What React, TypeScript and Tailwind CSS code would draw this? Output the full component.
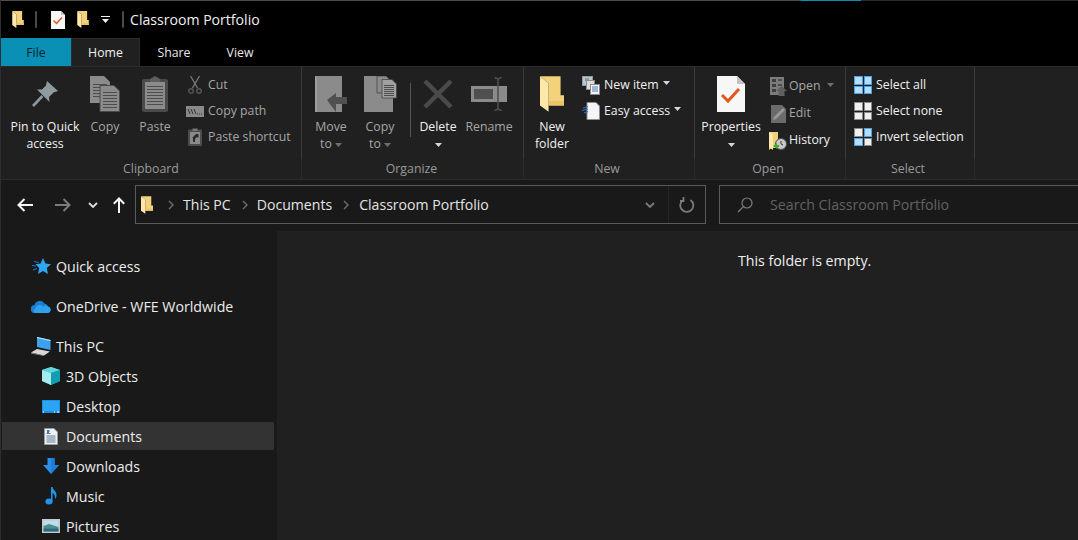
import type { ReactNode } from "react";

const FONT = "font-['Open_Sans','Noto_Sans',sans-serif]";

function Folder({ className = "" }: { className?: string }) {
  return (
    <svg viewBox="0 0 70 103" className={className}>
      <path d="M0 0H60V55H70V85H25V20Z" fill="#f4d27c" />
      <path d="M0 0L25 20V103L0 85Z" fill="#fde7a9" />
      <path d="M25 20V85H70V72H25Z" fill="#ecc468" />
    </svg>
  );
}

function CheckDoc({ className = "" }: { className?: string }) {
  return (
    <svg viewBox="0 0 28 36" className={className}>
      <path d="M0 0H20L28 8V36H0Z" fill="#f7f7f7" />
      <path d="M20 0V8H28Z" fill="#c4c4c4" />
      <path d="M5 19L11 25L22 13" fill="none" stroke="#e2571e" strokeWidth="3" />
    </svg>
  );
}

function Caret({ light = false, className = "" }: { light?: boolean; className?: string }) {
  return (
    <svg viewBox="0 0 7 4" className={`inline-block h-1 w-[7px] ${className}`}>
      <path d="M0 0H7L3.5 4Z" fill={light ? "#d8d8d8" : "#6e6e6e"} />
    </svg>
  );
}

function Pin() {
  return (
    <svg viewBox="0 0 26 26" className="h-[26px] w-[26px]">
      <path d="M15 0L26 10L21.5 11.5L17 16L17.5 21L5 8.5L10 8.5L14 4.5Z" fill="#8f9a9f" />
      <path d="M10.5 15L1 25" stroke="#8f9a9f" strokeWidth="2.6" />
    </svg>
  );
}

function DocLines({ x, y, w, n, gap = 3 }: { x: number; y: number; w: number; n: number; gap?: number }) {
  return (
    <>
      {Array.from({ length: n }).map((_, i) => (
        <rect key={i} x={x} y={y + i * gap} width={w} height="1" fill="#4c4c4c" />
      ))}
    </>
  );
}

function CopyBig() {
  return (
    <svg viewBox="0 0 30 36" className="h-9 w-[30px]">
      <path d="M0 0H14L20 6V27H0Z" fill="#8b8b8b" />
      <DocLines x={3} y={8} w={14} n={5} />
      <path d="M10 9.5H24L29.5 15V35.5H10Z" fill="#8b8b8b" stroke="#4a4a4a" />
      <DocLines x={13} y={16} w={14} n={6} />
    </svg>
  );
}

function PasteBig() {
  return (
    <svg viewBox="0 0 26 36" className="h-9 w-[26px]">
      <rect x="0" y="3" width="26" height="33" rx="2" fill="#4a4a4a" />
      <rect x="3" y="6" width="20" height="27" fill="#8b8b8b" />
      <path d="M8 3L13 0L18 3V6H8Z" fill="#5e5e5e" />
      <DocLines x={5} y={10} w={16} n={7} />
    </svg>
  );
}

function Scissors() {
  return (
    <svg viewBox="0 0 14 18" className="h-[18px] w-[14px]" fill="none" stroke="#7d7d7d" strokeWidth="1.2">
      <path d="M2.5 0L9.5 12M11.5 0L4.5 12" />
      <circle cx="3" cy="15" r="2.3" stroke="#555" strokeWidth="1.4" />
      <circle cx="11" cy="15" r="2.3" stroke="#555" strokeWidth="1.4" />
    </svg>
  );
}

function CopyPathIcon() {
  return (
    <svg viewBox="0 0 18 11" className="h-[11px] w-[18px]">
      <rect width="18" height="11" fill="#8a8a8a" />
      <path d="M2 3L4 8M5 3L7 8M8 3L10 8" stroke="#333" strokeWidth="1" />
      <path d="M11 8h1M13 8h1M15 8h1" stroke="#333" strokeWidth="1" />
    </svg>
  );
}

function PasteShortcutIcon() {
  return (
    <svg viewBox="0 0 14 18" className="h-[18px] w-[14px]">
      <rect y="1.5" width="14" height="16.5" rx="1" fill="#4d4d4d" />
      <rect x="2" y="4" width="10" height="12" fill="#8a8a8a" />
      <path d="M4.5 0.5H9.5V3H4.5Z" fill="#777" />
      <path d="M5 14V10H4L8 6L10.5 6V10L9 9L7 11V14Z" fill="#2b2b2b" />
    </svg>
  );
}

function MoveTo() {
  return (
    <svg viewBox="0 0 32 36" className="h-9 w-8">
      <path d="M0 0H27V36H0Z" fill="#8b8b8b" />
      <path d="M0 0L2 1V36H0Z" fill="#9d9d9d" />
      <path d="M12 24L21 17V21H32V28H21V36Z" fill="#505050" />
    </svg>
  );
}

function CopyTo() {
  return (
    <svg viewBox="0 0 33 36" className="h-9 w-[33px]">
      <path d="M0 0H22L29 7V36H0Z" fill="#8b8b8b" />
      <path d="M13 0H22L26 4V17H13Z" fill="#8b8b8b" stroke="#444" strokeWidth="0.8" />
      <path d="M18 3.5H28L32.5 8V22H18Z" fill="#a0a0a0" stroke="#444" strokeWidth="0.8" />
      <DocLines x={20} y={9} w={10} n={6} gap={2} />
    </svg>
  );
}

function DeleteX() {
  return (
    <svg viewBox="0 0 30 30" className="h-[30px] w-[30px]">
      <path d="M2 2L28 28M28 2L2 28" stroke="#4a4a4a" strokeWidth="4.5" />
    </svg>
  );
}

function RenameIcon() {
  return (
    <svg viewBox="0 0 36 34" className="h-[34px] w-9">
      <rect x="0" y="9" width="36" height="16" fill="#8b8b8b" />
      <rect x="3" y="12" width="19" height="10" fill="#4f4f4f" />
      <path d="M27 1.5C25.5 1.5 25 2 23.5 0M27 1.5C28.5 1.5 29 2 30.5 0M27 1.5V32.5M27 32.5C25.5 32.5 25 32 23.5 34M27 32.5C28.5 32.5 29 32 30.5 34" fill="none" stroke="#4f4f4f" strokeWidth="1.6" />
    </svg>
  );
}

function NewItemIcon() {
  return (
    <svg viewBox="0 0 18 19" className="h-[19px] w-[18px]">
      <rect x="0.5" y="0.5" width="10" height="9" fill="#a8cbe4" stroke="#9a9a9a" />
      <rect x="3" y="2" width="4" height="3" fill="#b98f6a" />
      <rect x="4.5" y="4.5" width="8" height="9" fill="#dcdcdc" stroke="#8a8a8a" />
      <rect x="8.5" y="8.5" width="9" height="10" fill="#f2f5fa" stroke="#8a8a8a" />
      <path d="M10 11h6M10 13h6M10 15h6" stroke="#4d7bb0" strokeWidth="1" />
    </svg>
  );
}

function EasyAccessIcon() {
  return (
    <svg viewBox="0 0 18 18" className="h-[18px] w-[18px]">
      <path d="M5 0.5H14L17.5 4V17.5H5Z" fill="#f5f5f7" stroke="#8e8e8e" />
      <path d="M1 6L6 4.5M0 8.5L6 7M2 11L6 9.5" stroke="#2a74c9" strokeWidth="1.2" />
    </svg>
  );
}

function OpenIcon() {
  return (
    <svg viewBox="0 0 17 19" className="h-[19px] w-[17px]">
      <rect width="14" height="18" fill="#7c7c7c" />
      <rect x="2" y="2" width="4" height="3" fill="#3e3e3e" />
      <rect x="2" y="7" width="4" height="3" fill="#3e3e3e" />
      <rect x="2" y="12" width="4" height="3" fill="#3e3e3e" />
      <path d="M8 3h4M8 8h4" stroke="#3e3e3e" strokeWidth="1.4" />
      <path d="M6 14L11.5 9L17 14H14.5V19H8.5V14Z" fill="#606060" />
    </svg>
  );
}

function EditIcon() {
  return (
    <svg viewBox="0 0 15 18" className="h-[18px] w-[15px]">
      <path d="M0 0H11L15 4V18H0Z" fill="#6b6b6b" />
      <path d="M2 15L3 12L12 3L14 5L5 14Z" fill="#989898" />
    </svg>
  );
}

function HistoryIcon() {
  return (
    <svg viewBox="0 0 18 18" className="h-[18px] w-[18px]">
      <path d="M0 0H9V12H12V16H3L0 18Z" fill="#f0cf7c" />
      <path d="M0 0L4 2V18L0 15Z" fill="#fde7a9" />
      <circle cx="12" cy="12" r="5.5" fill="#c9c9c9" stroke="#4f4f4f" />
      <path d="M12 9V12L14 13" stroke="#333" fill="none" />
      <path d="M4 14L8 11V13H10V15H8V17Z" fill="#3fae2a" />
    </svg>
  );
}

function SelectGrid({ on }: { on: boolean[] }) {
  return (
    <div className="grid h-[18px] w-[18px] grid-cols-2 gap-px">
      {on.map((blue, i) => (
        <div key={i} className={blue ? "border border-[#4ba3e3] bg-[#b6ddfb]" : "border border-[#8a8a8a] bg-[#f0f0f0]"} />
      ))}
    </div>
  );
}

function LargeBtn({ icon, w, ml, children, on = false }: { icon: ReactNode; w: string; ml?: string; children: ReactNode; on?: boolean }) {
  return (
    <div className={`flex shrink-0 flex-col items-center ${w} ${ml ?? ""}`}>
      <div className="flex h-[44px] items-center justify-center">{icon}</div>
      <div className={`mt-[2px] text-center text-[12.3px] leading-[17px] whitespace-nowrap ${on ? "text-[#f0f0f0]" : "text-[#a6a6a6]"}`}>{children}</div>
    </div>
  );
}

function SmallBtn({ icon, label, on = false, rowH = "h-[26px]", gap = "ml-1", caret }: { icon: ReactNode; label: string; on?: boolean; rowH?: string; gap?: string; caret?: ReactNode }) {
  return (
    <div className={`flex items-center ${rowH}`}>
      <div className="flex w-[18px] shrink-0 items-center justify-center">{icon}</div>
      <span className={`${gap} text-[12.3px] whitespace-nowrap ${on ? "text-[#f0f0f0]" : "text-[#a6a6a6]"}`}>{label}</span>
      {caret}
    </div>
  );
}

function Group({ w, label, labelPad = "", children }: { w: string; label: string; labelPad?: string; children: ReactNode }) {
  return (
    <div className={`flex shrink-0 flex-col ${w}`}>
      <div className="flex h-[92px] border-r border-[#3a3a3a] pt-[5px]">{children}</div>
      <div className={`flex h-[20px] items-center justify-center border-r border-[#2a2a2a] text-[12.3px] text-[#9a9a9a] ${labelPad}`}>{label}</div>
    </div>
  );
}

function Ribbon() {
  return (
    <div className="flex h-[114px] shrink-0 border-t border-b border-[#2b2b2b] bg-[#202020]">
      <Group w="w-[301px]" label="Clipboard">
        <LargeBtn w="w-[88px]" icon={<Pin />} on>Pin to Quick<br />access</LargeBtn>
        <LargeBtn w="w-[32px]" icon={<CopyBig />}>Copy</LargeBtn>
        <LargeBtn w="w-[40px]" ml="ml-[14px]" icon={<PasteBig />}>Paste</LargeBtn>
        <div className="ml-[11px] flex flex-col">
          <SmallBtn icon={<Scissors />} label="Cut" />
          <SmallBtn icon={<CopyPathIcon />} label="Copy path" />
          <SmallBtn icon={<PasteShortcutIcon />} label="Paste shortcut" />
        </div>
      </Group>
      <Group w="w-[222px]" label="Organize" labelPad="pr-[2px]">
        <LargeBtn w="w-[40px]" ml="ml-[9px]" icon={<MoveTo />}>Move<br />to <Caret /></LargeBtn>
        <LargeBtn w="w-[40px]" ml="ml-[9px]" icon={<CopyTo />}>Copy<br />to <Caret /></LargeBtn>
        <div className="mt-[11px] ml-[10px] h-[54px] w-px bg-[#555]" />
        <LargeBtn w="w-[40px]" ml="ml-[7px]" icon={<DeleteX />} on>Delete<br /><Caret light /></LargeBtn>
        <LargeBtn w="w-[50px]" ml="ml-[6px]" icon={<RenameIcon />}>Rename</LargeBtn>
      </Group>
      <Group w="w-[171px]" label="New" labelPad="pr-[4px]">
        <LargeBtn w="w-[40px]" ml="ml-[8px]" icon={<Folder className="h-9 w-[24px]" />} on>New<br />folder</LargeBtn>
        <div className="ml-[10px] flex flex-col">
          <SmallBtn icon={<NewItemIcon />} label="New item" on caret={<Caret light className="mb-1 ml-1" />} />
          <SmallBtn icon={<EasyAccessIcon />} label="Easy access" on caret={<Caret light className="mb-1 ml-1" />} />
        </div>
      </Group>
      <Group w="w-[151px]" label="Open" labelPad="pr-[4px]">
        <LargeBtn w="w-[60px]" ml="ml-[6px]" icon={<CheckDoc className="h-9 w-[28px]" />} on>Properties<br /><Caret light /></LargeBtn>
        <div className="mt-px ml-[8px] flex flex-col">
          <SmallBtn rowH="h-[27px]" gap="ml-[2px]" icon={<OpenIcon />} label="Open" caret={<Caret className="mb-1 ml-[6px]" />} />
          <SmallBtn rowH="h-[27px]" gap="ml-[2px]" icon={<EditIcon />} label="Edit" />
          <SmallBtn rowH="h-[27px]" gap="ml-[2px]" icon={<HistoryIcon />} label="History" on />
        </div>
      </Group>
      <Group w="w-[129px]" label="Select" labelPad="pr-[4px]">
        <div className="ml-[8px] flex flex-col">
          <SmallBtn icon={<SelectGrid on={[true, true, true, true]} />} label="Select all" on />
          <SmallBtn icon={<SelectGrid on={[false, false, false, false]} />} label="Select none" on />
          <SmallBtn icon={<SelectGrid on={[false, true, true, false]} />} label="Invert selection" on />
        </div>
      </Group>
    </div>
  );
}

function Arrow({ color, flip = false }: { color: string; flip?: boolean }) {
  return (
    <svg viewBox="0 0 16 14" className={`h-[14px] w-4 ${flip ? "rotate-180" : ""}`} fill="none" stroke={color} strokeWidth="2">
      <path d="M16 7H1.5M7.5 1L1.5 7L7.5 13" />
    </svg>
  );
}

function Chevron({ color, className = "" }: { color: string; className?: string }) {
  return (
    <svg viewBox="0 0 10 6" className={`h-[6px] w-[10px] ${className}`} fill="none" stroke={color} strokeWidth="1.8">
      <path d="M1 1L5 5L9 1" />
    </svg>
  );
}

function Crumb({ className = "" }: { className?: string }) {
  return (
    <svg viewBox="0 0 6 10" className={`h-[10px] w-[6px] shrink-0 ${className}`} fill="none" stroke="#6e6e6e" strokeWidth="1.4">
      <path d="M1 1L5 5L1 9" />
    </svg>
  );
}

function NavBar() {
  return (
    <div className="flex h-[51px] shrink-0 bg-[#191919] pt-[5px]">
      <div className="flex h-[39px] w-[134px] shrink-0 items-center">
        <div className="ml-[16px]"><Arrow color="#f5f5f5" /></div>
        <div className="ml-[22px]"><Arrow color="#7c7c7c" flip /></div>
        <Chevron color="#dedede" className="ml-[17px]" />
        <svg viewBox="0 0 12 16" className="ml-[15px] h-4 w-3" fill="none" stroke="#f5f5f5" strokeWidth="2">
          <path d="M6 16V1.5M0.8 6.8L6 1.5L11.2 6.8" />
        </svg>
      </div>
      <div className="flex h-[39px] w-[571px] shrink-0 items-center border border-[#5a5a5a] text-[14.1px] text-[#e4e4e4]">
        <Folder className="ml-[5px] h-[18px] w-[12px] shrink-0" />
        <Crumb className="ml-[15px]" />
        <span className="ml-[9px]">This PC</span>
        <Crumb className="ml-[11px]" />
        <span className="ml-[9px]">Documents</span>
        <Crumb className="ml-[11px]" />
        <span className="ml-[10px]">Classroom Portfolio</span>
        <div className="ml-auto flex h-full items-center">
          <Chevron color="#7c7c7c" className="mr-[13px]" />
          <div className="h-full w-px bg-[#262626]" />
          <svg viewBox="0 0 16 16" className="mx-[10px] h-4 w-4" fill="none" stroke="#7c7c7c" strokeWidth="1.8">
            <path d="M5 2.5A6.5 6.5 0 1 0 11.5 3M4.5 0V4H1" />
          </svg>
        </div>
      </div>
      <div className="ml-[13px] flex h-[39px] flex-1 items-center border-y border-l border-[#5a5a5a]">
        <svg viewBox="0 0 16 16" className="ml-[17px] h-4 w-4" fill="none" stroke="#7c7c7c" strokeWidth="1.2">
          <circle cx="10" cy="6" r="5" />
          <path d="M6.5 9.5L1 15" />
        </svg>
        <span className="ml-[17px] text-[14.2px] text-[#626262]">Search Classroom Portfolio</span>
      </div>
    </div>
  );
}

const sideIcons = {
  quick: (
    <svg viewBox="0 0 20 18" className="h-[18px] w-5">
      <path d="M12 1L14.4 6.6L20 7.2L15.8 11L17 17L12 14L7 17L8.2 11L4.5 7.2L9.6 6.6Z" fill="#2ea6f0" />
      <path d="M3 4.5L8 5.5M1 8.5L5 9M2 13L6 11.5" stroke="#1c74c4" strokeWidth="1.2" />
    </svg>
  ),
  onedrive: (
    <svg viewBox="0 0 20 13" className="h-[13px] w-5">
      <path d="M4 13A4 4 0 0 1 3.5 5A5.5 5.5 0 0 1 13.5 3.5A4.5 4.5 0 0 1 17 6.5A3.3 3.3 0 0 1 17 13Z" fill="#1a7fd4" />
      <path d="M4 13A2.5 2.5 0 0 1 4.5 8.5A4 4 0 0 1 12 7A3 3 0 0 1 17 6.6A3.3 3.3 0 0 1 17 13Z" fill="#2ea0ee" />
    </svg>
  ),
  pc: (
    <svg viewBox="0 0 20 19" className="h-[19px] w-5">
      <path d="M6 0L19.5 3V13L6 10Z" fill="#3aa2ea" />
      <path d="M6 0L19.5 3V4L6 1Z" fill="#cfe9fb" />
      <path d="M0 15.5L6 12L19 14.5L13 18.5Z" fill="#d8d8d8" />
      <path d="M0 15.5V16.5L13 19V18.5Z" fill="#8e8e8e" />
    </svg>
  ),
  cube: (
    <svg viewBox="0 0 18 18" className="h-[18px] w-[18px]">
      <path d="M9 0L18 3V14L9 18L0 14V3Z" fill="#2bb8c9" />
      <path d="M0 3L9 6V18L0 14Z" fill="#a5ecef" />
      <path d="M9 0L18 3L9 6L0 3Z" fill="#60d7dc" />
      <path d="M9 6L18 3V14L9 18Z" fill="#149cb1" />
    </svg>
  ),
  desktop: (
    <svg viewBox="0 0 18 13" className="h-[13px] w-[18px]">
      <rect width="18" height="13" fill="#1690e8" />
      <rect x="1" y="1" width="16" height="10" fill="#2ca4f3" />
      <path d="M1 12h1M12 12h1M15 12h2" stroke="#ffffff" strokeWidth="1" />
    </svg>
  ),
  documents: (
    <svg viewBox="0 0 14 17" className="h-[17px] w-[14px]">
      <path d="M0.5 0.5H10L13.5 4V16.5H0.5Z" fill="#f1f1f1" stroke="#9a9a9a" />
      <path d="M3 3h3M2.5 5.5h4M2.5 8h9M2.5 10h9M2.5 12h9M2.5 14h9" stroke="#5d7ea3" strokeWidth="1" />
      <rect x="3" y="2" width="2" height="3" fill="#1f83d8" />
    </svg>
  ),
  downloads: (
    <svg viewBox="0 0 16 16" className="h-4 w-4">
      <path d="M4.5 0H11.5V7H16L8 16L0 7H4.5Z" fill="#2b8fe6" />
      <path d="M8 0H11.5V7H16L8 16Z" fill="#1f7fd6" />
    </svg>
  ),
  music: (
    <svg viewBox="0 0 12 18" className="h-[18px] w-3">
      <ellipse cx="4" cy="14.5" rx="3.6" ry="3" fill="#1f95ea" />
      <path d="M6 0H7.5C8 3 11.5 4 11.5 8C11.5 9.5 11 11 10 12C10.3 9 9.5 7 7.5 6V14.5H6Z" fill="#1f95ea" />
    </svg>
  ),
  pictures: (
    <svg viewBox="0 0 18 14" className="h-[14px] w-[18px]">
      <rect width="18" height="14" fill="#c9c9c9" />
      <rect x="1.5" y="1.5" width="15" height="11" fill="#bcdcf0" />
      <path d="M1.5 7L7 5L16.5 8V12.5H1.5Z" fill="#4e8f8c" />
      <path d="M1.5 9.5H16.5V12.5H1.5Z" fill="#2f6c80" />
    </svg>
  ),
};

function SideRow({ icon, label, sub = false, selected = false, className = "" }: { icon: ReactNode; label: string; sub?: boolean; selected?: boolean; className?: string }) {
  return (
    <div className={`flex h-[30px] items-center ${sub ? "pl-[40px]" : "pl-[30px]"} ${className} relative`}>
      {selected && <div className="absolute inset-x-[1px] inset-y-px bg-[#333333]" />}
      <div className="relative flex w-[20px] shrink-0 items-center justify-center">{icon}</div>
      <span className="relative ml-[5px] pt-[2px] text-[14.2px] whitespace-nowrap text-[#ececec]">{label}</span>
    </div>
  );
}

export default function App() {
  return (
    <div className={`flex h-[540px] w-[1078px] flex-col overflow-hidden border-l border-[#2e2e2e] bg-[#191919] ${FONT}`}>
      <div className="flex h-px shrink-0">
        <div className="w-[800px] bg-[#4d4d4d]" />
        <div className="w-[60px] bg-[#0a8fb5]" />
        <div className="flex-1 bg-[#2b2b2b]" />
      </div>
      <div className="flex h-[37px] shrink-0 items-center bg-black">
        <Folder className="ml-[11px] h-[17px] w-[12px]" />
        <div className="ml-[11px] h-[17px] w-[2px] rounded-sm bg-[#4a4a4a]" />
        <CheckDoc className="ml-[14px] h-[18px] w-[14px]" />
        <Folder className="ml-[12px] h-[17px] w-[12px]" />
        <svg viewBox="0 0 9 7" className="ml-[12px] h-[7px] w-[9px]">
          <path d="M0 0H9V1H0ZM1 3H8L4.5 7Z" fill="#f0f0f0" />
        </svg>
        <div className="ml-[12px] h-[17px] w-[2px] rounded-sm bg-[#4a4a4a]" />
        <span className="ml-[6px] text-[14.1px] text-[#f0f0f0]">Classroom Portfolio</span>
      </div>
      <div className="flex h-[28px] shrink-0 bg-black text-[12.3px]">
        <div className="flex w-[70px] items-center justify-center bg-[#0a8fb5] pt-[2px] text-[#06222c]">File</div>
        <div className="flex w-[69px] items-center justify-center border-x border-t border-[#2b2b2b] bg-[#202020] pt-[2px] text-[#f0f0f0]">Home</div>
        <div className="flex w-[68px] items-center justify-center pt-[2px] text-[#e8e8e8]">Share</div>
        <div className="flex w-[64px] items-center justify-center pt-[2px] text-[#e8e8e8]">View</div>
      </div>
      <Ribbon />
      <NavBar />
      <div className="flex min-h-0 flex-1">
        <div className="w-[274px] shrink-0 pt-[20px]">
          <SideRow icon={sideIcons.quick} label="Quick access" className="mb-[10px]" />
          <SideRow icon={sideIcons.onedrive} label="OneDrive - WFE Worldwide" className="mb-[10px]" />
          <SideRow icon={sideIcons.pc} label="This PC" />
          <SideRow icon={sideIcons.cube} label="3D Objects" sub />
          <SideRow icon={sideIcons.desktop} label="Desktop" sub />
          <SideRow icon={sideIcons.documents} label="Documents" sub selected />
          <SideRow icon={sideIcons.downloads} label="Downloads" sub />
          <SideRow icon={sideIcons.music} label="Music" sub />
          <SideRow icon={sideIcons.pictures} label="Pictures" sub />
        </div>
        <div className="flex-1 border-l-[2px] border-[#191919] bg-[#202020] pt-[17px] pl-[461px]">
          <span className="text-[14.2px] text-[#f0f0f0]">This folder is empty.</span>
        </div>
      </div>
    </div>
  );
}
